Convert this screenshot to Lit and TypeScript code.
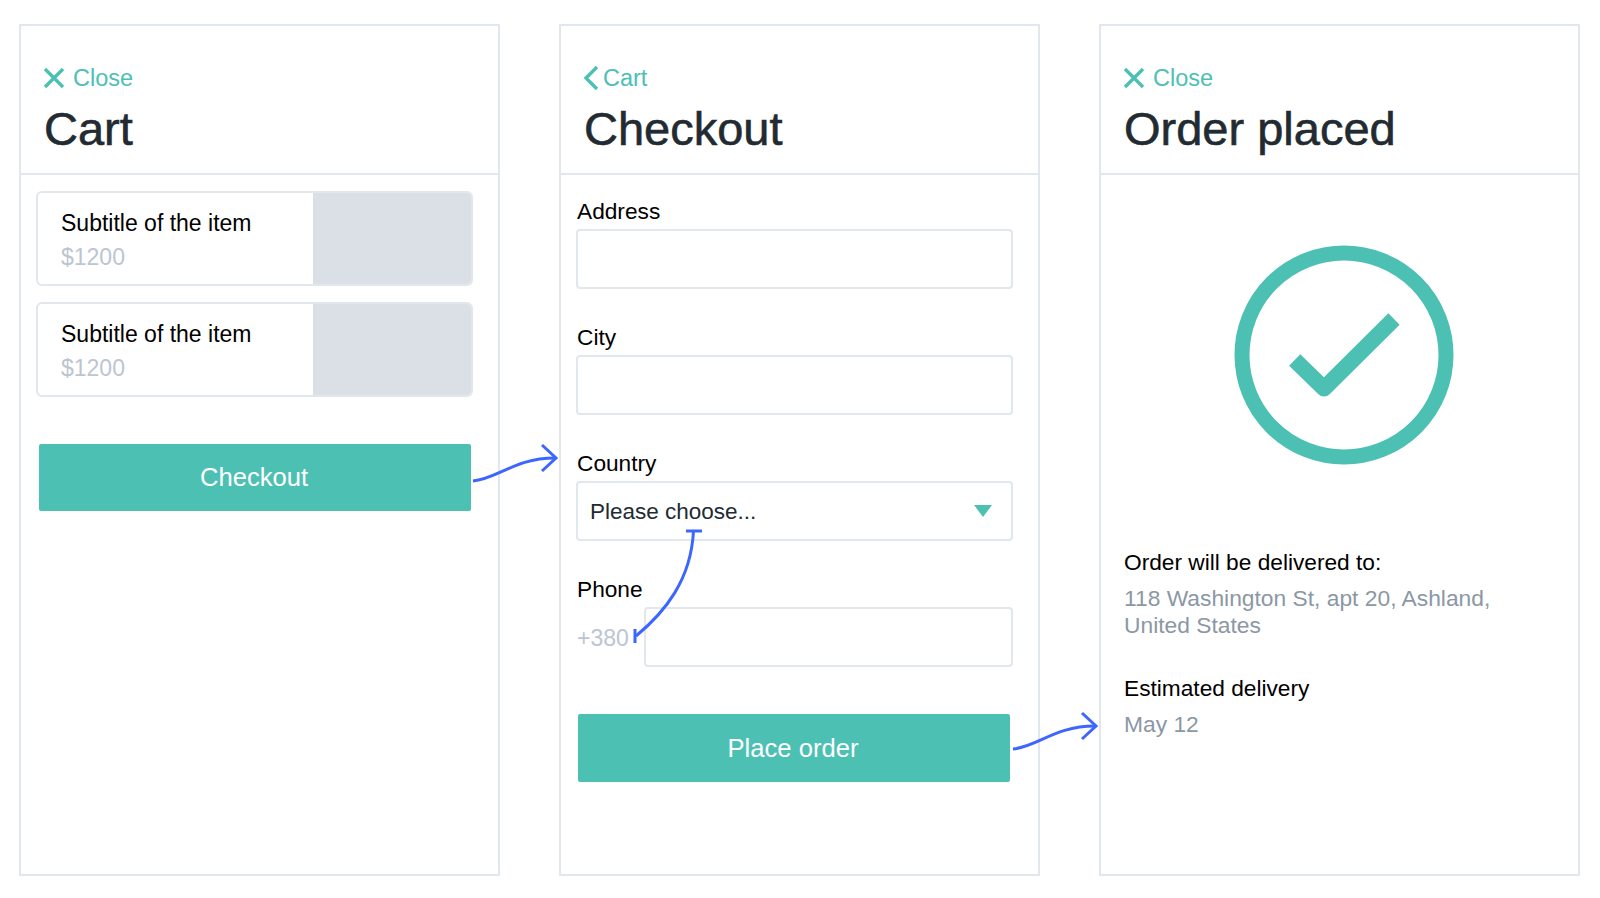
import { LitElement, html, css, svg } from "lit";
import { customElement } from "lit/decorators.js";

const closeIcon = html`<svg class="nav-icon" width="22" height="22" viewBox="0 0 22 22" fill="none" stroke="currentColor" stroke-width="3.4">
  <path d="M2 2l18 18M20 2L2 20" />
</svg>`;

const backIcon = html`<svg class="nav-icon" width="16" height="26" viewBox="0 0 16 26" fill="none" stroke="currentColor" stroke-width="3.4">
  <path d="M14 2L3 13l11 11" />
</svg>`;

const arrowHead = (x: number, y: number) =>
  svg`<path d="M${x - 14} ${y - 13}L${x} ${y}L${x - 14} ${y + 13}" />`;

@customElement("app-root")
export class AppRoot extends LitElement {
  static styles = css`
    :host {
      display: block;
      position: relative;
      width: 1600px;
      height: 898px;
      background: #fff;
      font-family: "Liberation Sans", Arial, sans-serif;
      color: #000;
      overflow: hidden;
    }

    .board {
      display: flex;
      gap: 59px;
      padding: 24px 0 0 19px;
    }

    .panel {
      box-sizing: border-box;
      width: 481px;
      height: 852px;
      border: 2px solid #e1e7ed;
    }

    .header {
      box-sizing: border-box;
      height: 149px;
      padding: 36px 0 0 22px;
      border-bottom: 2px solid #e1e7ed;
    }

    .nav {
      display: flex;
      align-items: center;
      gap: 8px;
      height: 32px;
      color: #4dc0b4;
      font-size: 23.5px;
    }

    .nav.back {
      gap: 4px;
    }

    .title {
      margin: 2px 0 0 1px;
      font-size: 47px;
      line-height: 66px;
      font-weight: 400;
      color: #222b32;
      -webkit-text-stroke: 0.6px #222b32;
    }

    .cart-body {
      display: flex;
      flex-direction: column;
      padding: 16px 0 0 15px;
    }

    .item {
      box-sizing: border-box;
      display: flex;
      width: 437px;
      height: 95px;
      margin-bottom: 16px;
      border: 2px solid #e1e7ed;
      border-radius: 6px;
      overflow: hidden;
    }

    .item-text {
      flex: 1;
      padding: 15px 0 0 23px;
    }

    .item-name {
      font-size: 23px;
      line-height: 30px;
    }

    .price {
      margin-top: 4px;
      font-size: 23px;
      line-height: 30px;
      color: #bcc5d1;
    }

    .thumb {
      width: 160px;
      margin: -2px -2px -2px 0;
      background: #dae0e6;
    }

    .button {
      box-sizing: border-box;
      display: flex;
      align-items: center;
      justify-content: center;
      height: 67px;
      padding-right: 2px;
      border-radius: 2px;
      background: #4dc0b4;
      color: #fff;
      font-size: 25.6px;
    }

    .cart-body .button {
      width: 432px;
      margin: 31px 0 0 3px;
    }

    .form-body {
      padding: 20px 0 0 15px;
    }

    .field {
      height: 126px;
    }

    .label {
      padding-left: 1px;
      font-size: 22.7px;
      line-height: 33px;
      height: 34px;
    }

    .input {
      box-sizing: border-box;
      display: flex;
      align-items: center;
      justify-content: space-between;
      width: 437px;
      height: 60px;
      padding: 0 19px 0 12px;
      border: 2px solid #e1e7ed;
      border-radius: 4px;
      font-size: 22.5px;
      color: #222b32;
    }

    .select-text {
      margin-top: 2px;
    }

    .caret {
      width: 0;
      height: 0;
      border-left: 9px solid transparent;
      border-right: 9px solid transparent;
      border-top: 12px solid #4dc0b4;
    }

    .phone {
      display: flex;
      align-items: center;
    }

    .prefix {
      width: 67px;
      margin-top: 2px;
      padding-left: 1px;
      font-size: 23px;
      color: #bcc5d1;
    }

    .phone .input {
      width: 369px;
    }

    .form-body .button {
      width: 432px;
      height: 68px;
      margin: 15px 0 0 2px;
    }

    .done-body {
      padding: 70px 0 0 22px;
    }

    .tick {
      display: block;
      margin-left: 111px;
    }

    .detail {
      margin-top: 12px;
      padding-left: 1px;
      font-size: 22.7px;
      line-height: 27px;
    }

    .detail-value {
      padding-left: 1px;
      font-size: 22.8px;
      line-height: 27px;
      margin-top: 9px;
      color: #8b97a5;
    }

    .summary {
      margin-top: 84px;
    }

    .summary .detail + .detail-value + .detail {
      margin-top: 36px;
    }

    .arrows {
      position: absolute;
      inset: 0;
      width: 1600px;
      height: 898px;
      pointer-events: none;
      fill: none;
      stroke: #3d66ff;
      stroke-width: 3;
    }
  `;

  cartItem() {
    return html`<div class="item">
      <div class="item-text">
        <div class="item-name">Subtitle of the item</div>
        <div class="price">$1200</div>
      </div>
      <div class="thumb"></div>
    </div>`;
  }

  render() {
    return html`
      <div class="board">
        <section class="panel">
          <div class="header">
            <div class="nav">${closeIcon}<span>Close</span></div>
            <h1 class="title">Cart</h1>
          </div>
          <div class="cart-body">
            ${this.cartItem()} ${this.cartItem()}
            <div class="button">Checkout</div>
          </div>
        </section>

        <section class="panel">
          <div class="header">
            <div class="nav back">${backIcon}<span>Cart</span></div>
            <h1 class="title">Checkout</h1>
          </div>
          <div class="form-body">
            <div class="field">
              <div class="label">Address</div>
              <div class="input"></div>
            </div>
            <div class="field">
              <div class="label">City</div>
              <div class="input"></div>
            </div>
            <div class="field">
              <div class="label">Country</div>
              <div class="input">
                <span class="select-text">Please choose...</span>
                <span class="caret"></span>
              </div>
            </div>
            <div class="field">
              <div class="label">Phone</div>
              <div class="phone">
                <span class="prefix">+380</span>
                <div class="input"></div>
              </div>
            </div>
            <div class="button">Place order</div>
          </div>
        </section>

        <section class="panel">
          <div class="header">
            <div class="nav">${closeIcon}<span>Close</span></div>
            <h1 class="title">Order placed</h1>
          </div>
          <div class="done-body">
            <svg class="tick" width="220" height="220" viewBox="0 0 220 220" fill="none" stroke="#4dc0b4">
              <circle cx="110" cy="110" r="102" stroke-width="15" />
              <path d="M60.700 115L90 143.500L160 74" stroke-width="16" stroke-linejoin="round" />
            </svg>
            <div class="summary">
              <div class="detail">Order will be delivered to:</div>
              <div class="detail-value">118 Washington St, apt 20, Ashland,<br />United States</div>
              <div class="detail">Estimated delivery</div>
              <div class="detail-value">May 12</div>
            </div>
          </div>
        </section>
      </div>

      <svg class="arrows" viewBox="0 0 1600 898">
        <path d="M473 481C497 479 515 458 555 458" />
        ${arrowHead(556, 458)}
        <path d="M693.500 531C691 580 665 612 636 636" />
        <path d="M686 531H702M635 629V643" />
        <path d="M1013 749C1037 747 1055 726 1095 726" />
        ${arrowHead(1096, 726)}
      </svg>
    `;
  }
}
